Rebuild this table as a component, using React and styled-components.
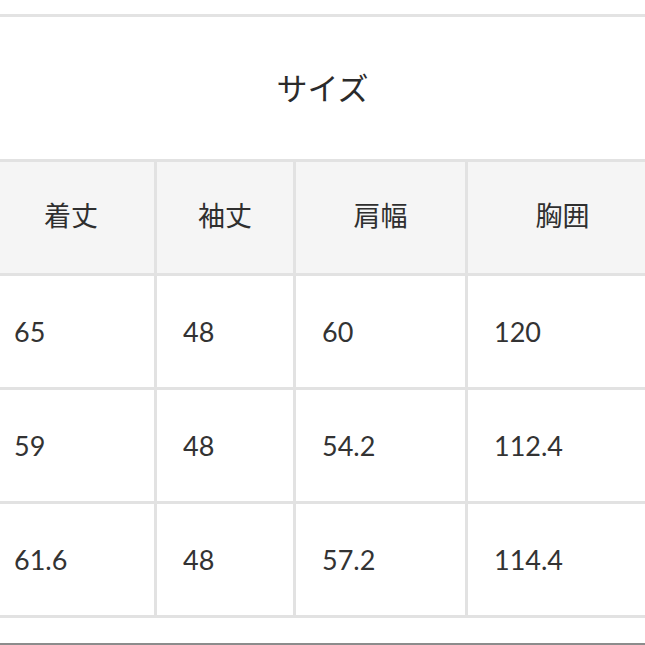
import React from 'react';
import styled, { createGlobalStyle } from 'styled-components';

const GlobalStyle = createGlobalStyle`
    html, body {
        margin: 0;
        padding: 0;
        background: #ffffff;
        overflow: hidden;
    }
    body {
        font-family: Lato, "Noto Sans CJK JP", sans-serif;
        color: #333333;
    }
`;

const Page = styled.div`
    width: 645px;
    height: 645px;
    overflow-x: clip;
    display: flex;
    flex-direction: column;
    padding-top: 14px;
    box-sizing: border-box;
`;

const TopRule = styled.div`
    height: 3px;
    background: #e3e3e3;
`;

const Title = styled.h2`
    margin: 0;
    height: 142px;
    display: flex;
    align-items: center;
    justify-content: center;
    font-family: "Noto Sans CJK JP", sans-serif;
    font-weight: 400;
    font-size: 31px;
    color: #2b2b2b;
    padding-bottom: 4px;
    box-sizing: border-box;
`;

// table runs past both edges of the screen, as in the crop
const SizeTable = styled.div`
    flex-shrink: 0;
    margin: 0 -30px 0 -15px;
    display: grid;
    grid-template-columns: 166px 136px 169px 189px;
    grid-auto-rows: 111px;
    gap: 3px;
    padding: 3px 0 3px 3px;
    background: #e2e2e2;
`;

const HeadCell = styled.div`
    background: #f5f5f5;
    display: flex;
    align-items: center;
    justify-content: center;
    padding-bottom: 6px;
    font-family: "Noto Sans CJK JP", sans-serif;
    font-size: 27px;
    color: #2f2f2f;
`;

const Cell = styled.div`
    background: #ffffff;
    display: flex;
    align-items: center;
    padding-left: 26px;
    font-family: Lato, sans-serif;
    font-size: 27px;
    color: #333333;
`;

const Spacer = styled.div`
    flex: 1;
`;

const BottomRule = styled.div`
    height: 2px;
    background: #8c8c8c;
`;

const headers = ['着丈', '袖丈', '肩幅', '胸囲'];
const rows = [
    ['65', '48', '60', '120'],
    ['59', '48', '54.2', '112.4'],
    ['61.6', '48', '57.2', '114.4'],
];

export default function App() {
    return (<>
        <GlobalStyle />
        <Page>
            <TopRule />
            <Title>サイズ</Title>
            <SizeTable>
                {headers.map((h) => <HeadCell key={h}>{h}</HeadCell>)}
                {rows.map((r, i) => r.map((v, j) => <Cell key={i + '-' + j}>{v}</Cell>))}
            </SizeTable>
            <Spacer />
            <BottomRule />
        </Page>
    </>);
}
